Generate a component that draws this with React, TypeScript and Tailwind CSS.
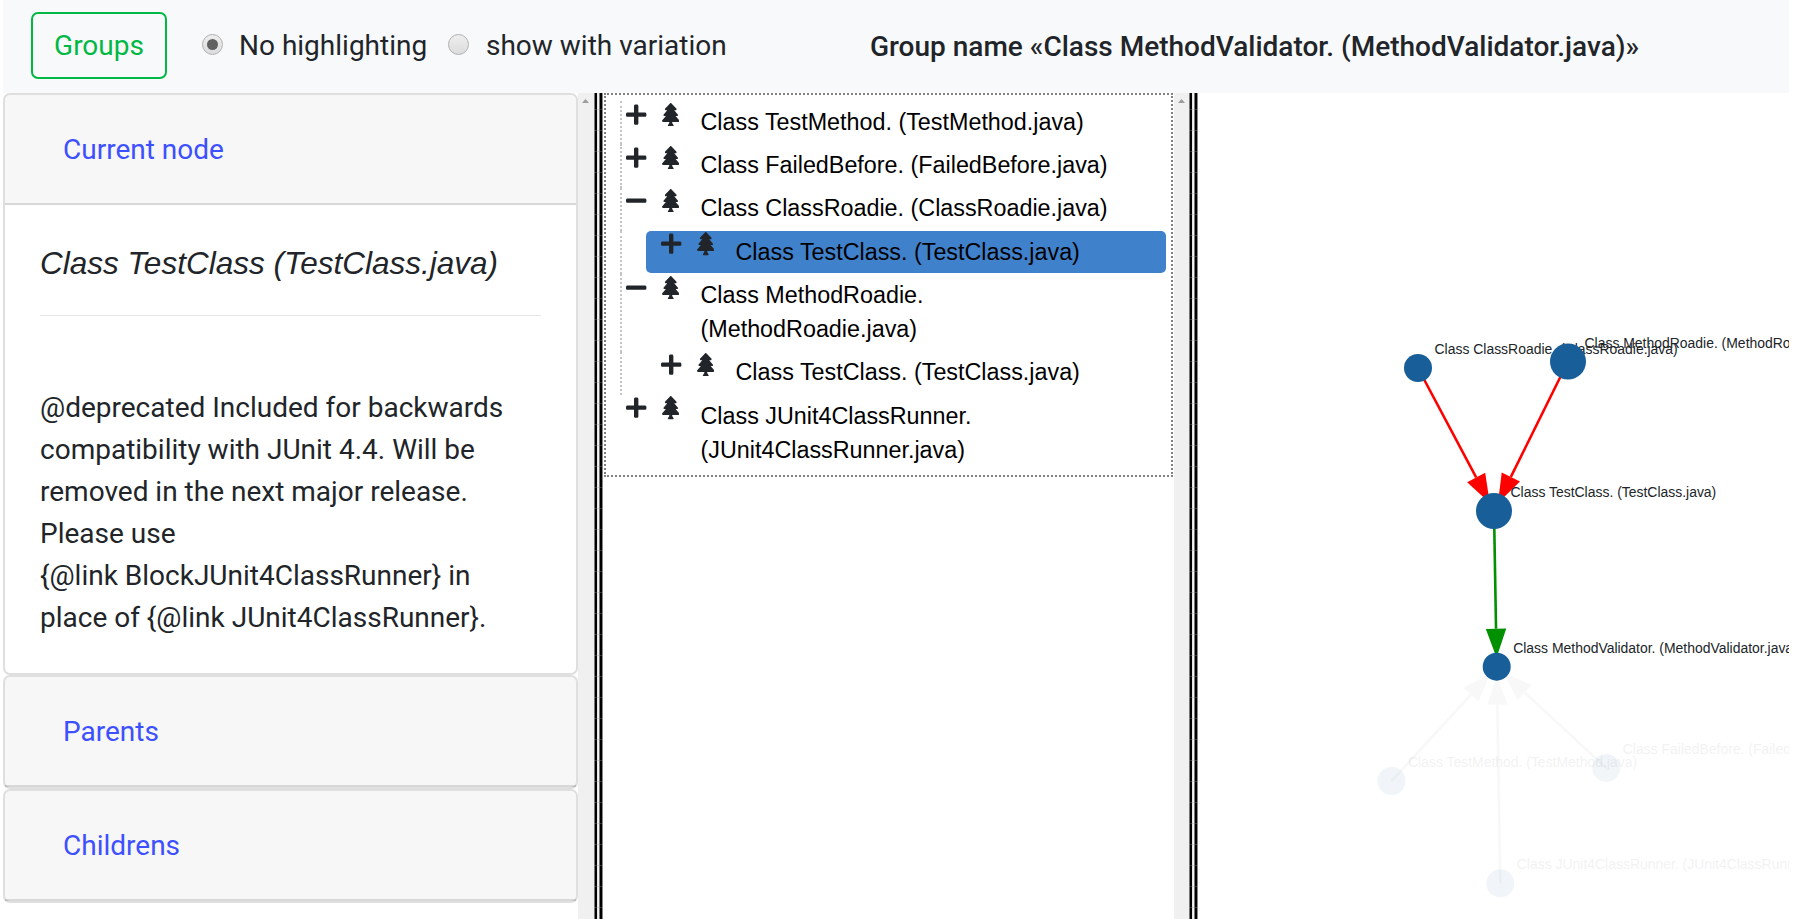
import React, { ReactNode } from 'react';

const TREE_PATH =
  'M378.31 378.49L298.42 288h30.63c9.01 0 16.98-5 20.78-13.06 3.8-8.04 2.55-17.26-3.28-24.05L268.42 160h28.89c9.1 0 17.3-5.35 20.86-13.61 3.52-8.13 1.86-17.59-4.24-24.08L203.66 4.83c-6.03-6.45-17.28-6.45-23.32 0L70.06 122.31c-6.1 6.49-7.75 15.95-4.24 24.08C69.38 154.65 77.59 160 86.69 160h28.89l-78.14 90.91c-5.81 6.78-7.06 15.99-3.27 24.04C37.97 283 45.93 288 54.95 288h30.63L5.69 378.49c-6 6.79-7.36 16.09-3.56 24.26 3.75 8.05 12 13.25 21.01 13.25H160v24.45l-30.29 48.4c-5.32 10.64 2.42 23.16 14.31 23.16h95.96c11.89 0 19.63-12.52 14.31-23.16L224 440.45V416h136.86c9.01 0 17.26-5.2 21.01-13.25 3.8-8.17 2.44-17.47-3.56-24.26z';
const PLUS_PATH =
  'M416 208H272V64c0-17.67-14.33-32-32-32h-32c-17.67 0-32 14.33-32 32v144H32c-17.67 0-32 14.33-32 32v32c0 17.67 14.33 32 32 32h144v144c0 17.67 14.33 32 32 32h32c17.67 0 32-14.33 32-32V304h144c17.67 0 32-14.33 32-32v-32c0-17.67-14.33-32-32-32z';
const MINUS_PATH =
  'M416 208H32c-17.67 0-32 14.33-32 32v32c0 17.67 14.33 32 32 32h384c17.67 0 32-14.33 32-32v-32c0-17.67-14.33-32-32-32z';

type Row = { lines: string[]; open?: boolean; nested?: boolean; selected?: boolean };

const ROWS: Row[] = [
  { lines: ['Class TestMethod. (TestMethod.java)'] },
  { lines: ['Class FailedBefore. (FailedBefore.java)'] },
  { lines: ['Class ClassRoadie. (ClassRoadie.java)'], open: true },
  { lines: ['Class TestClass. (TestClass.java)'], nested: true, selected: true },
  { lines: ['Class MethodRoadie.', '(MethodRoadie.java)'], open: true },
  { lines: ['Class TestClass. (TestClass.java)'], nested: true },
  { lines: ['Class JUnit4ClassRunner.', '(JUnit4ClassRunner.java)'] },
];

function TreeRow({ row, last }: { row: Row; last: boolean }) {
  return (
    <div
      className={
        (last ? 'border-transparent' : 'border-[#c4c4c4]') +
        ' border-l-2 border-dotted pb-[1.33px] ' +
        (row.nested ? 'pl-6' : '')
      }
    >
      <div
        className={
          'flex items-start rounded-[5px] pt-[3.7px] pb-[4.3px] ' +
          (row.nested ? 'pl-[15.2px] ' : 'pl-[4.2px] ') +
          (row.selected ? 'bg-[#4081cc]' : '')
        }
      >
        <div className="-mt-[2.2px] flex w-[74.3px] shrink-0 items-start gap-[15px] text-[#212529]">
          <svg viewBox="0 0 448 512" className="h-[23.33px] w-[20.4px]" fill="currentColor">
            <path d={row.open ? MINUS_PATH : PLUS_PATH} />
          </svg>
          <svg viewBox="0 0 384 512" className="h-[23.33px] w-[17.5px]" fill="currentColor">
            <path d={TREE_PATH} />
          </svg>
        </div>
        <div>
          {row.lines.map((l) => (
            <div key={l}>{l}</div>
          ))}
        </div>
      </div>
    </div>
  );
}

function Scrollbar({ className }: { className: string }) {
  return (
    <div className={'flex shrink-0 bg-[#f0f0f0] pt-[6px] pl-1 ' + className}>
      <svg viewBox="0 0 7 4" className="h-1 w-[7px]">
        <path d="M3.5 0L7 4H0z" fill="#9c9c9c" />
      </svg>
    </div>
  );
}

function Splitter() {
  return (
    <div className="h-full w-[9px] shrink-0 bg-[repeating-linear-gradient(to_bottom,transparent_0px,transparent_16px,rgba(150,150,150,0.35)_16px,rgba(150,150,150,0.35)_17px,transparent_17px,transparent_21px),linear-gradient(to_right,#777_0px,#777_1px,#000_1px,#000_3px,#d8d8d8_3px,#f4f4f4_4px,#f4f4f4_5px,#777_5px,#777_6px,#000_6px,#000_8px,#888_8px,#888_9px)]" />
  );
}

function Card({ title, children }: { title: string; children?: ReactNode }) {
  return (
    <section className="rounded-[7px] border-2 border-black/[.125] bg-white">
      <div className="flex h-[110px] items-center rounded-t-[5px] border-b-2 border-black/[.125] bg-black/[.03] pt-0.5 pl-[58px] text-[#3d50ff]">
        {title}
      </div>
      {children}
    </section>
  );
}

function Radio({ checked }: { checked?: boolean }) {
  return (
    <span className="-mt-[3px] flex size-[21px] items-center justify-center rounded-full border border-[#b0b0b0] bg-linear-to-b from-[#eeeeee] to-[#dcdcdc]">
      {checked && <span className="size-[11px] rounded-full bg-[#616161]" />}
    </span>
  );
}

const NODES = [
  { x: 1418, y: 368, r: 14, label: 'Class ClassRoadie. (ClassRoadie.java)' },
  { x: 1568, y: 361.5, r: 18, label: 'Class MethodRoadie. (MethodRoadie.java)' },
  { x: 1494, y: 511, r: 18, label: 'Class TestClass. (TestClass.java)' },
  { x: 1496.7, y: 666.7, r: 14, label: 'Class MethodValidator. (MethodValidator.java)' },
  { x: 1391.5, y: 781, r: 14, label: 'Class TestMethod. (TestMethod.java)', faded: true },
  { x: 1606.3, y: 768, r: 14, label: 'Class FailedBefore. (FailedBefore.java)', faded: true },
  { x: 1500.3, y: 883.3, r: 14, label: 'Class JUnit4ClassRunner. (JUnit4ClassRunner.java)', faded: true },
];
const EDGES = [
  { from: 0, to: 2, color: '#ff0000' },
  { from: 1, to: 2, color: '#ff0000' },
  { from: 2, to: 3, color: '#009000' },
  { from: 4, to: 3, color: '#f8f8f8' },
  { from: 5, to: 3, color: '#f8f8f8' },
  { from: 6, to: 3, color: '#f8f8f8' },
];

function Graph() {
  return (
    <svg viewBox="1198 93 591 826" className="h-[826px] w-[591px] shrink-0 overflow-hidden">
      {EDGES.map((e, i) => {
        const a = NODES[e.from];
        const b = NODES[e.to];
        const d = Math.hypot(b.x - a.x, b.y - a.y);
        const ux = (b.x - a.x) / d;
        const uy = (b.y - a.y) / d;
        const bx = b.x - ux * 38;
        const by = b.y - uy * 38;
        const h = 10.2;
        return (
          <g key={i} fill={e.color} stroke="none">
            <line x1={a.x} y1={a.y} x2={bx} y2={by} stroke={e.color} strokeWidth={2.6} />
            <polygon
              points={`${bx - uy * h},${by + ux * h} ${b.x - ux * 9},${b.y - uy * 9} ${bx + uy * h},${by - ux * h}`}
            />
          </g>
        );
      })}
      {NODES.map((n) => (
        <g key={n.label} opacity={n.faded ? 0.055 : 1}>
          <circle cx={n.x} cy={n.y} r={n.r} fill="#185f9a" />
          <text x={n.x + 16.5} y={n.y - 14} className="font-['Liberation_Sans',sans-serif] text-[13.94px]" fill="#212529">
            {n.label}
          </text>
        </g>
      ))}
    </svg>
  );
}

export default function App() {
  return (
    <div className="h-[919px] w-[1812px] overflow-hidden bg-white pl-[3px] font-['Roboto',sans-serif] text-[28px] leading-[42px] text-[#212529]">
      <header className="flex h-[93px] w-[1786px] items-center bg-[#f8f9fa] pl-7">
        <div className="-mt-0.5 flex items-center">
          <button className="mr-[35px] h-[67px] w-[136px] rounded-[7px] border-2 border-[#00b944] text-[#00b944]">
            Groups
          </button>
          <label className="flex w-[246px] items-center gap-4">
            <Radio checked />
            No highlighting
          </label>
          <label className="flex w-[422px] items-center gap-[17px]">
            <Radio />
            show with variation
          </label>
        </div>
        <h1 className="whitespace-nowrap font-medium">Group name «Class MethodValidator. (MethodValidator.java)»</h1>
      </header>
      <main className="flex h-[826px]">
        <aside className="w-[575px] shrink-0">
          <Card title="Current node">
            <div className="px-[35px] pt-[35px] pb-[34px]">
              <h2 className="font-['Liberation_Sans',sans-serif] text-[31.5px] leading-[47.25px] italic">
                Class TestClass (TestClass.java)
              </h2>
              <hr className="mt-[28px] mb-[70.75px] border-[#e5e5e5]" />
              <p className="whitespace-nowrap">
                @deprecated Included for backwards
                <br />
                compatibility with JUnit 4.4. Will be
                <br />
                removed in the next major release.
                <br />
                Please use
                <br />
                {'{@link BlockJUnit4ClassRunner} in'}
                <br />
                {'place of {@link JUnit4ClassRunner}.'}
              </p>
            </div>
          </Card>
          <Card title="Parents" />
          <Card title="Childrens" />
        </aside>
        <Scrollbar className="w-4" />
        <Splitter />
        <div className="w-[571px] shrink-0 px-px">
          <div className="h-[384px] border-2 border-dotted border-[#808080] pt-[6px] pr-[5px] pl-[14px] font-['Liberation_Sans',sans-serif] text-[23.33px] leading-[34px] whitespace-nowrap text-black">
            {ROWS.map((row, i) => (
              <TreeRow key={i} row={row} last={i === ROWS.length - 1} />
            ))}
          </div>
        </div>
        <Scrollbar className="w-[15px]" />
        <Splitter />
        <Graph />
      </main>
    </div>
  );
}
